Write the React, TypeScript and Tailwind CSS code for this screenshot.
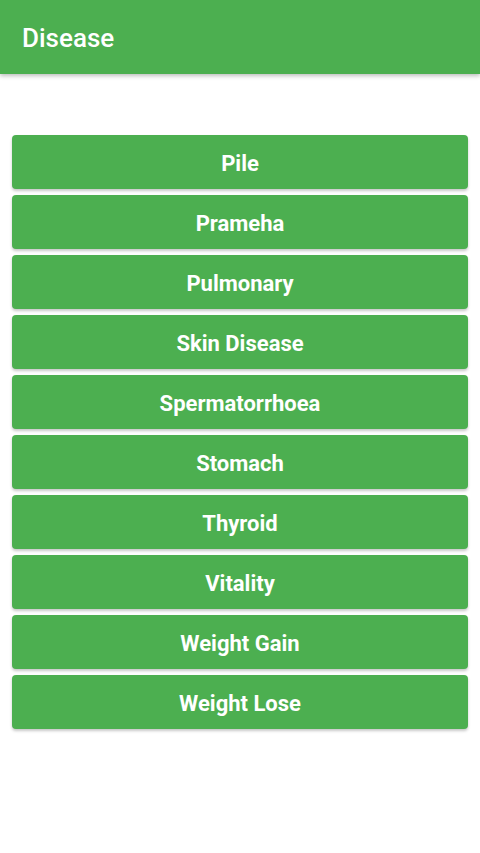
import React from 'react';

const diseases = [
  'Pile',
  'Prameha',
  'Pulmonary',
  'Skin Disease',
  'Spermatorrhoea',
  'Stomach',
  'Thyroid',
  'Vitality',
  'Weight Gain',
  'Weight Lose',
];

const App = () => {
  return (
    <div className="min-h-[853px] bg-white" style={{ fontFamily: 'Roboto, "Noto Sans", sans-serif' }}>
      <header className="h-[74px] bg-[#4caf50] flex items-center px-[22px] pt-[3px] shadow-[0_2px_4px_rgba(0,0,0,0.25)]">
        <h1 className="text-white text-[26px] font-medium">Disease</h1>
      </header>

      <div className="flex flex-col gap-[6px] px-[12px] pt-[61px]">
        {diseases.map((name) => (
          <button
            key={name}
            className="h-[54px] w-full rounded-[4px] bg-[#4caf50] pt-[3px] text-white text-[22px] font-bold shadow-[0_2px_3px_rgba(0,0,0,0.22)]"
          >
            {name}
          </button>
        ))}
      </div>
    </div>
  );
};

export default App;
